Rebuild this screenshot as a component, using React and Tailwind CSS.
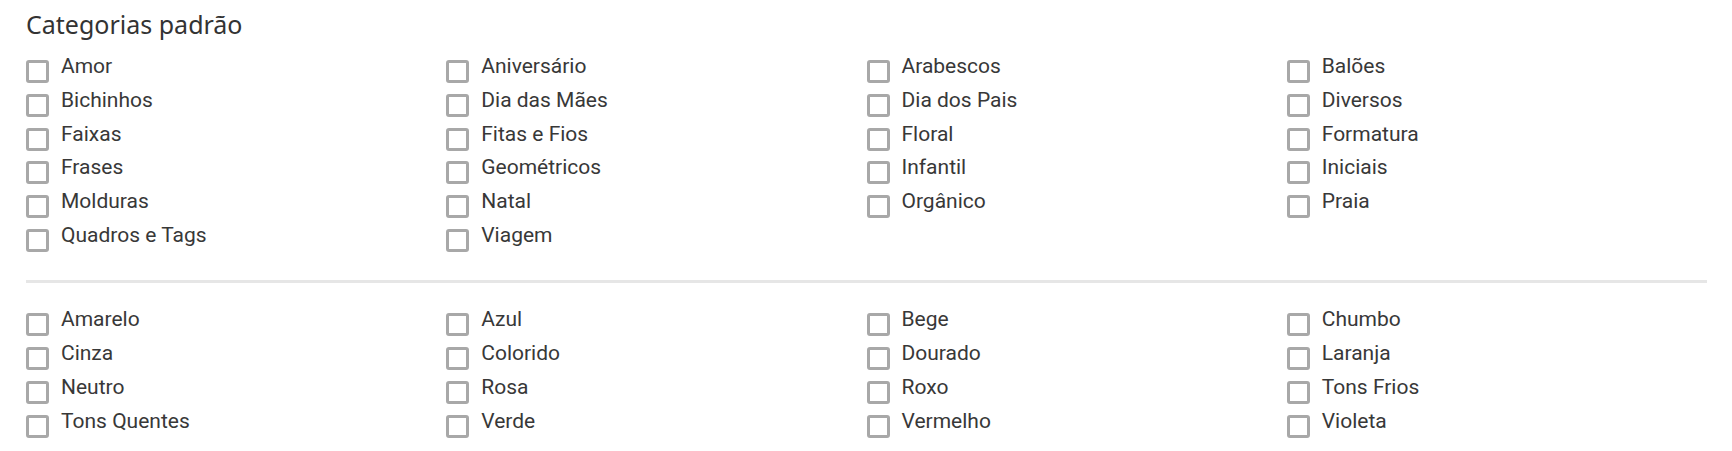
import React from "react";

const group1 = [
  "Amor", "Aniversário", "Arabescos", "Balões",
  "Bichinhos", "Dia das Mães", "Dia dos Pais", "Diversos",
  "Faixas", "Fitas e Fios", "Floral", "Formatura",
  "Frases", "Geométricos", "Infantil", "Iniciais",
  "Molduras", "Natal", "Orgânico", "Praia",
  "Quadros e Tags", "Viagem",
];

const group2 = [
  "Amarelo", "Azul", "Bege", "Chumbo",
  "Cinza", "Colorido", "Dourado", "Laranja",
  "Neutro", "Rosa", "Roxo", "Tons Frios",
  "Tons Quentes", "Verde", "Vermelho", "Violeta",
];

function Item({ label }) {
  return (
    <label className="flex items-start h-[33.8px] cursor-pointer">
      <span className="mt-[9px] w-[23px] h-[23px] shrink-0 border-[3px] border-[#a8a8a8] rounded-[3px] bg-white" />
      <span
        className="ml-[12px] text-[21px] leading-[30px] text-[#383838]"
        style={{ fontFamily: "Roboto, 'Liberation Sans', sans-serif" }}
      >
        {label}
      </span>
    </label>
  );
}

export default function App() {
  return (
    <div className="w-[1732px] h-[451px] bg-white pl-[26px] pr-[25px] overflow-hidden">
      <h2
        className="pt-[12px] mb-[14px] text-[25px] leading-[25px] text-[#333333] font-normal"
        style={{ fontFamily: "'Noto Sans', 'Open Sans', sans-serif" }}
      >
        Categorias padrão
      </h2>
      <div className="grid grid-cols-4">
        {group1.map((l) => (
          <Item key={l} label={l} />
        ))}
      </div>
      <div className="mt-[26px] h-[3px] bg-[#e6e6e6]" />
      <div className="mt-[21.5px] grid grid-cols-4">
        {group2.map((l) => (
          <Item key={l} label={l} />
        ))}
      </div>
    </div>
  );
}
